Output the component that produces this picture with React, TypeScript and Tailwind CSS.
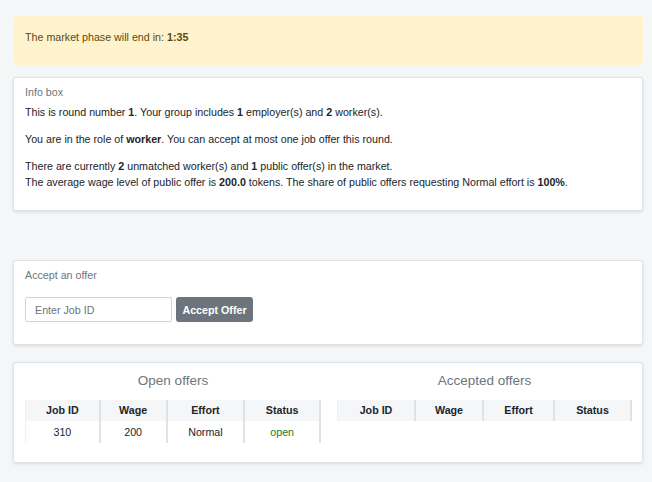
import React from "react";

const FONT = { fontFamily: '"Liberation Sans", Arial, sans-serif' };

const OPEN_OFFERS = [{ id: 310, wage: 200, effort: "Normal", status: "open" }];

const Card: React.FC<{ className?: string; children: React.ReactNode }> = ({ className = "", children }) => (
  <div className={`bg-white border border-[#dfe2e6] rounded-[3px] shadow-[0_1px_3px_rgba(0,0,0,0.12)] ${className}`}>
    {children}
  </div>
);

const OfferTable: React.FC<{
  title: string;
  className: string;
  widths: string[];
  rows: typeof OPEN_OFFERS;
}> = ({ title, className, widths, rows }) => (
  <div className={`flex flex-col shrink-0 ${className}`}>
    <div className="text-center text-[13.5px] leading-[18px] text-[#6c757d] h-[37px] pt-[9px]">{title}</div>
    <div className="flex flex-col text-[10.7px] leading-[21px] text-[#212529]">
      <div className="flex bg-[#f5f6f8] font-bold">
        {["Job ID", "Wage", "Effort", "Status"].map((h, i) => (
          <div
            key={h}
            className={`h-[21px] text-center border-r-2 border-[#e0e3e6] ${widths[i]} ${i === 0 ? "border-l border-l-[#eef0f2]" : ""}`}
          >
            {h}
          </div>
        ))}
      </div>
      {rows.map((r) => (
        <div key={r.id} className="flex leading-[22px]">
          <div className={`h-[22px] text-center border-r-2 border-[#e0e3e6] border-l border-l-[#eef0f2] ${widths[0]}`}>{r.id}</div>
          <div className={`text-center border-r-2 border-[#e0e3e6] ${widths[1]}`}>{r.wage}</div>
          <div className={`text-center border-r-2 border-[#e0e3e6] ${widths[2]}`}>{r.effort}</div>
          <div className={`text-center border-r-2 border-[#e0e3e6] text-[#1e7b2a] ${widths[3]}`}>{r.status}</div>
        </div>
      ))}
    </div>
  </div>
);

export default function App() {
  return (
    <div className="w-[652px] h-[482px] bg-[#f5f6f8] pl-[13px] pr-[9px] pt-[16px] overflow-hidden" style={FONT}>
      {/* Timer */}
      <div className="bg-[#fff3cd] rounded-[3px] h-[49px] px-[12px] pt-[13px] text-[10.7px] leading-[16px] text-[#5c4a0c]">
        The market phase will end in: <b>1:35</b>
      </div>

      {/* Info box */}
      <Card className="mt-[12px] h-[134px] px-[11px] pt-[6px] text-[10.7px] leading-[16px] text-[#212529]">
        <div className="text-[#6c757d]">Info box</div>
        <p className="mt-[4px]">
          This is round number <b>1</b>. Your group includes <b>1</b> employer(s) and <b>2</b> worker(s).
        </p>
        <p className="mt-[11px]">
          You are in the role of <b>worker</b>. You can accept at most one job offer this round.
        </p>
        <p className="mt-[11px]">
          There are currently <b>2</b> unmatched worker(s) and <b>1</b> public offer(s) in the market.
          <br />
          The average wage level of public offer is <b>200.0</b> tokens. The share of public offers requesting Normal
          effort is <b>100%</b>.
        </p>
      </Card>

      {/* Accept an offer */}
      <Card className="mt-[49px] h-[85px] px-[11px] pt-[6px] text-[10.7px] leading-[16px]">
        <div className="text-[#6c757d]">Accept an offer</div>
        <div className="mt-[14px] flex gap-[4px]">
          <input
            type="text"
            placeholder="Enter Job ID"
            className="w-[147px] h-[25px] border border-[#ced4da] rounded-[2px] px-[9px] text-[10.7px] text-[#495057] placeholder:text-[#6c757d] outline-none"
            style={FONT}
          />
          <button className="w-[77px] h-[25px] bg-[#6c757d] text-white rounded-[3px] text-[10.7px] font-bold" style={FONT}>
            Accept Offer
          </button>
        </div>
      </Card>

      {/* Offers */}
      <Card className="mt-[17px] h-[101px] pl-[11px] flex gap-[16px]">
        <OfferTable
          title="Open offers"
          className="w-[296px]"
          widths={["w-[76px]", "w-[67px]", "w-[78px]", "w-[76px]"]}
          rows={OPEN_OFFERS}
        />
        <OfferTable
          title="Accepted offers"
          className="w-[295px]"
          widths={["w-[79px]", "w-[68px]", "w-[71px]", "w-[77px]"]}
          rows={[]}
        />
      </Card>
    </div>
  );
}
